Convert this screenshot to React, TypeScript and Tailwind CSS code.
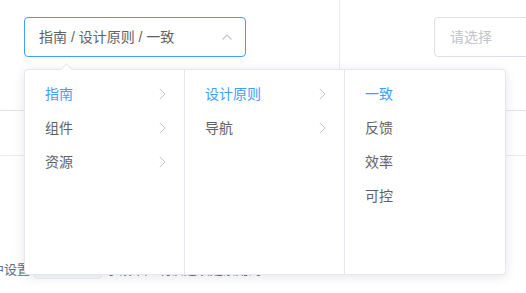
import React from 'react';

const columns = [
  { items: ['指南', '组件', '资源'], active: 0, hasChildren: true },
  { items: ['设计原则', '导航'], active: 0, hasChildren: true },
  { items: ['一致', '反馈', '效率', '可控'], active: 0, hasChildren: false },
];

function ChevronRight() {
  return (
    <svg width="7" height="12" viewBox="0 0 7 12" fill="none">
      <polyline points="0.8,0.8 6,6 0.8,11.2" stroke="#c0c4cc" strokeWidth="1" />
    </svg>
  );
}

function ChevronUp() {
  return (
    <svg width="10" height="6" viewBox="0 0 10 6" fill="none">
      <polyline points="0.5,5.5 5,1 9.5,5.5" stroke="#c0c4cc" strokeWidth="1.1" />
    </svg>
  );
}

export default function App() {
  return (
    <div
      className="relative w-[526px] h-[293px] overflow-hidden bg-white"
      style={{ fontFamily: '"Liberation Sans", "Noto Sans CJK SC", sans-serif' }}
    >
      {/* demo blocks */}
      <div className="flex h-[111px] border-b border-[#e2e5ee]">
        <div className="w-[340px] shrink-0 border-r border-[#ebebeb] pl-6 pt-[17px]">
          <div className="flex h-[40px] w-[222px] items-center justify-between rounded-[4px] border border-[#409eff] pl-[14px] pr-[13px] text-[14px] text-[#606266]">
            <span>指南 / 设计原则 / 一致</span>
            <ChevronUp />
          </div>
        </div>
        <div className="shrink-0 pl-[94px] pt-[17px]">
          <div className="flex h-[40px] w-[200px] items-center rounded-[4px] border border-[#dcdfe6] pl-[15px] text-[14px] text-[#c0c4cc]">
            请选择
          </div>
        </div>
      </div>
      <div className="h-[45px] border-b border-[#ebebeb]" />
      <p className="ml-[-87px] mt-[104px] whitespace-nowrap text-[13px] leading-[20px] text-[#5e6d82]">
        通过在数据源中设置
        <code className="mx-[4px] rounded-[4px] border border-[#eaeefb] bg-[#f9fafc] px-[4px] text-[12px] text-[#5e6d82]" style={{ fontFamily: '"Liberation Mono", monospace' }}>
          disabled
        </code>
        字段来声明该选项是禁用的
      </p>

      {/* cascader dropdown */}
      <div className="absolute left-[24px] top-[69px] h-[206px] w-[482px] rounded-[4px] border border-[#e4e7ed] bg-white shadow-[0_2px_12px_0_rgba(0,0,0,0.1)]">
        <div className="absolute left-[37px] top-[-5px] h-[9px] w-[9px] rotate-45 border-l border-t border-[#e4e7ed] bg-white" />
        <div className="relative flex h-full">
          {columns.map((col, ci) => (
            <div
              key={ci}
              className={`w-[160px] py-[7px] ${ci < 2 ? 'border-r border-[#e4e7ed]' : ''}`}
            >
              {col.items.map((item, i) => (
                <div
                  key={item}
                  className={`flex h-[34px] items-center justify-between pl-[20px] pr-[18px] text-[14px] ${
                    i === col.active ? 'text-[#409eff]' : 'text-[#606266]'
                  }`}
                >
                  <span>{item}</span>
                  {col.hasChildren && <ChevronRight />}
                </div>
              ))}
            </div>
          ))}
        </div>
      </div>
    </div>
  );
}
